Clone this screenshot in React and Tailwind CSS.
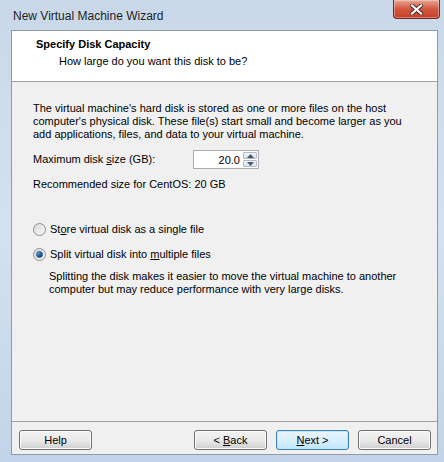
import { useState } from "react";

const font = { fontFamily: '"Liberation Sans", Arial, sans-serif' };

export default function App() {
  const [split, setSplit] = useState(true);
  const [size, setSize] = useState("20.0");

  return (
    <div
      className="w-[444px] h-[462px] flex flex-col overflow-hidden bg-gradient-to-b from-[#c9d8e9] via-[#d4e1ee] to-[#c2d4e8] text-[11px] text-black"
      style={font}
    >
      {/* TITLE BAR */}
      <div className="h-[30px] flex items-start justify-between pl-[13px] pr-[4px]">
        <span className="mt-[7px] text-[12px] text-[#1e1e1e]">New Virtual Machine Wizard</span>
        <button className="w-[47px] h-[19px] flex items-center justify-center rounded-b-[4px] border border-t-0 border-[#6d2b22] bg-gradient-to-b from-[#e8a493] via-[#d0573f] to-[#c53e26] shadow-[inset_0_0_0_1px_rgba(255,255,255,0.35)]">
          <svg width="13" height="11" viewBox="0 0 13 11">
            <path d="M2 1.5 L11 9.5 M11 1.5 L2 9.5" stroke="#4a2a26" strokeWidth="4" strokeLinecap="square" />
            <path d="M2 1.5 L11 9.5 M11 1.5 L2 9.5" stroke="#ffffff" strokeWidth="2.2" strokeLinecap="square" />
          </svg>
        </button>
      </div>

      {/* CONTENT */}
      <div className="flex-1 flex flex-col ml-[11px] mr-[6px] mb-[7px] border border-[#8d9bad] bg-[#f0f0f0]">
        {/* HEADER */}
        <div className="h-[51px] bg-white border-b border-[#a0a0a0] pt-[7px]">
          <div className="pl-[24px] font-bold leading-[13px]">Specify Disk Capacity</div>
          <div className="pl-[47px] mt-[4px] leading-[13px]">How large do you want this disk to be?</div>
        </div>

        {/* BODY */}
        <div className="flex-1 pl-[21px] pr-[12px] pt-[20px] leading-[13px] whitespace-nowrap">
          <p>
            The virtual machine's hard disk is stored as one or more files on the host
            <br />
            computer's physical disk. These file(s) start small and become larger as you
            <br />
            add applications, files, and data to your virtual machine.
          </p>

          <div className="flex items-center mt-[9px] h-[19px]">
            <span className="w-[160px]">
              Maximum disk <u>s</u>ize (GB):
            </span>
            <div className="flex items-center w-[66px] h-[19px] border border-[#abadb3] bg-white">
              <input
                value={size}
                onChange={(e) => setSize(e.target.value)}
                className="w-[48px] h-full text-right pr-[2px] bg-transparent outline-none text-[11px]"
                style={font}
              />
              <div className="ml-auto mr-[1px] flex flex-col w-[14px] h-[15px] gap-[1px]">
                <SpinButton up />
                <SpinButton />
              </div>
            </div>
          </div>

          <div className="mt-[9px]">Recommended size for CentOS: 20 GB</div>

          <div className="mt-[32px] flex flex-col gap-[12px]">
            <Radio checked={!split} onClick={() => setSplit(false)}>
              St<u>o</u>re virtual disk as a single file
            </Radio>
            <Radio checked={split} onClick={() => setSplit(true)}>
              Split virtual disk into <u>m</u>ultiple files
            </Radio>
          </div>

          <p className="pl-[16px] mt-[9px]">
            Splitting the disk makes it easier to move the virtual machine to another
            <br />
            computer but may reduce performance with very large disks.
          </p>
        </div>

        {/* FOOTER */}
        <div className="h-[33px] border-t border-[#a0a0a0] flex items-start pt-[8px] pl-[7px] pr-[6px]">
          <WinButton>Help</WinButton>
          <div className="ml-auto flex gap-[9px]">
            <WinButton>
              &lt; <u>B</u>ack
            </WinButton>
            <WinButton primary>
              <u>N</u>ext &gt;
            </WinButton>
            <WinButton>Cancel</WinButton>
          </div>
        </div>
      </div>
    </div>
  );
}

function SpinButton({ up }) {
  return (
    <div className="flex-1 flex items-center justify-center border border-[#b5b9c0] rounded-[1px] bg-gradient-to-b from-[#f4f6f8] to-[#dde2e8]">
      <svg width="7" height="4" viewBox="0 0 7 4">
        <path d={up ? "M0 4 L3.5 0 L7 4 Z" : "M0 0 L3.5 4 L7 0 Z"} fill="#3d5a80" />
      </svg>
    </div>
  );
}

function Radio({ checked, onClick, children }) {
  return (
    <button onClick={onClick} className="flex items-center gap-[3px] text-left">
      <span className="w-[13px] h-[13px] rounded-full border border-[#8e8f8f] bg-gradient-to-br from-[#d9d9d9] to-[#f8f8f8] flex items-center justify-center">
        {checked && (
          <span className="w-[7px] h-[7px] rounded-full bg-gradient-to-br from-[#8ec8f0] via-[#1e6fb0] to-[#0b3b6b] border border-[#1b4d80]" />
        )}
      </span>
      <span className="ml-[1px]">{children}</span>
    </button>
  );
}

function WinButton({ primary, children }) {
  return (
    <button
      className={`w-[73px] h-[20px] rounded-[3px] border flex items-center justify-center text-[11px] ${
        primary
          ? "border-[#3c7fb1] bg-gradient-to-b from-[#eaf6fd] via-[#d9f0fc] to-[#bee6fd] shadow-[inset_0_0_0_1px_#bfe7fd]"
          : "border-[#707070] bg-gradient-to-b from-[#f2f2f2] via-[#ebebeb] to-[#cfcfcf] shadow-[inset_0_0_0_1px_#fcfcfc]"
      }`}
    >
      <span>{children}</span>
    </button>
  );
}
